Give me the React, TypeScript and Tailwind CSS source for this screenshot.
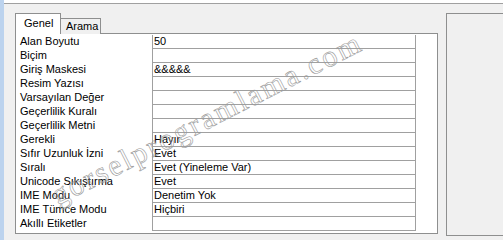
import React from "react";

const rows: [string, string][] = [
  ["Alan Boyutu", "50"],
  ["Biçim", ""],
  ["Giriş Maskesi", "&&&&&"],
  ["Resim Yazısı", ""],
  ["Varsayılan Değer", ""],
  ["Geçerlilik Kuralı", ""],
  ["Geçerlilik Metni", ""],
  ["Gerekli", "Hayır"],
  ["Sıfır Uzunluk İzni", "Evet"],
  ["Sıralı", "Evet (Yineleme Var)"],
  ["Unicode Sıkıştırma", "Evet"],
  ["IME Modu", "Denetim Yok"],
  ["IME Tümce Modu", "Hiçbiri"],
  ["Akıllı Etiketler", ""],
];

export default function App() {
  return (
    <div
      className="relative w-[503px] h-[240px] overflow-hidden bg-[#f0f0f0] flex text-[11px] text-black"
      style={{ fontFamily: '"Liberation Sans", Arial, sans-serif' }}
    >
      <div className="w-[4px] shrink-0 bg-[#bcd3ee]" />
      <div className="flex-1 flex flex-col">
        <div className="h-[3px] bg-white border-b border-[#a0a0a0] box-content" />
        <div className="flex pl-[11px] pt-[9px]">
          <div className="flex flex-col">
            <div className="flex items-end h-[21px] relative z-10">
              <div className="w-[46px] h-[21px] bg-white border border-b-0 border-[#8e8f8f] pl-[8px] pt-[2px] leading-[14px]">
                Genel
              </div>
              <div className="w-[41px] h-[16px] -ml-px bg-[#f0f0f0] border border-b-0 border-[#8e8f8f] pl-[5px] leading-[14px]">
                Arama
              </div>
            </div>
            <div className="w-[423px] h-[201px] -mt-px bg-white border border-[#8e8f8f] pt-px pl-px">
              <div className="flex flex-col">
                {rows.map(([label, value], i) => (
                  <div key={i} className="flex h-[14px]">
                    <div className="w-[135px] pl-[3px] leading-[13px] whitespace-nowrap">{label}</div>
                    <div className="w-[264px] border-l border-r border-b border-[#a0a0a0] pl-[1px] leading-[13px] whitespace-nowrap">
                      {value}
                    </div>
                  </div>
                ))}
              </div>
            </div>
          </div>
          <div className="ml-[8px] w-[70px] h-[223px] border border-[#8e8f8f] bg-[#f0f0f0]" />
        </div>
      </div>
      <div
        className="absolute left-[60px] top-[180px] origin-[0_100%] -rotate-[27deg] whitespace-nowrap text-[30px] leading-none tracking-[2.5px] text-transparent [-webkit-text-stroke:0.6px_#9a9a9a] pointer-events-none"
        style={{ fontFamily: '"Liberation Serif", "Times New Roman", serif' }}
      >
        gorselprogramlama.com
      </div>
    </div>
  );
}
